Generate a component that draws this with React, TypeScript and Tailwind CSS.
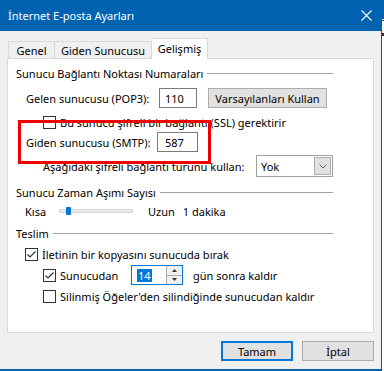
import React from "react";

const Check = ({ checked }: { checked?: boolean }) => (
	<div className="w-[13px] h-[13px] border border-[#333333] bg-white flex items-center justify-center shrink-0">
		{checked && (
			<svg width="11" height="11" viewBox="0 0 11 11">
				<path d="M1.5 5.5 L4 8 L9.5 2.5" fill="none" stroke="#333333" strokeWidth="1.2" />
			</svg>
		)}
	</div>
);

const GroupTitle = ({ text }: { text: string }) => (
	<div className="flex items-center h-[16px] w-[317px]">
		<span className="whitespace-nowrap">{text}</span>
		<div className="flex-1 h-px bg-[#a0a0a0] ml-[4px]" />
	</div>
);

const App = () => {
	return (
		<div className="relative w-[384px] h-[371px] flex bg-white text-[11px] text-black font-['Noto_Sans','DejaVu_Sans',sans-serif] leading-none overflow-hidden">
			<div className="w-[382px] h-full flex flex-col bg-[#f0f0f0] border-r border-b-2 border-[#0063b1]">
				{/* title bar */}
				<div className="h-[31px] bg-[#0063b1] flex items-center justify-between pl-[8px] pr-[9px] text-white">
					<span className="text-[11px]">İnternet E-posta Ayarları</span>
					<svg width="11" height="11" viewBox="0 0 11 11">
						<path d="M0.5 0.5 L10.5 10.5 M10.5 0.5 L0.5 10.5" stroke="#ffffff" strokeWidth="1.1" />
					</svg>
				</div>

				<div className="pl-[7px] pt-[7px]">
					{/* tabs */}
					<div className="flex items-end h-[20px] pl-[1px]">
						<div className="h-[17px] w-[47px] border border-b-0 border-[#d9d9d9] bg-[#f0f0f0] flex items-center justify-center pt-[1px]">
							Genel
						</div>
						<div className="h-[17px] w-[97px] border border-b-0 border-l-0 border-[#d9d9d9] bg-[#f0f0f0] flex items-center justify-center pt-[1px]">
							Giden Sunucusu
						</div>
						<div className="relative z-10 h-[21px] w-[56px] -mb-px border border-b-0 border-l-0 border-[#d9d9d9] bg-white flex items-center justify-center pb-[2px]">
							Gelişmiş
						</div>
					</div>

					{/* panel */}
					<div className="w-[367px] h-[275px] border border-[#d9d9d9] bg-white pl-[8px] pt-[6px] flex flex-col">
						<GroupTitle text="Sunucu Bağlantı Noktası Numaraları" />

						<div className="flex items-center h-[20px] mt-[7px] pl-[10px]">
							<span className="w-[133px] whitespace-nowrap">Gelen sunucusu (POP3):</span>
							<div className="w-[38px] h-[20px] border border-[#7a7a7a] flex items-center pl-[5px]">110</div>
							<div className="ml-[11px] w-[119px] h-[20px] border border-[#adadad] bg-[#e1e1e1] flex items-center justify-center">
								Varsayılanları Kullan
							</div>
						</div>

						<div className="flex items-center h-[14px] mt-[7px] pl-[27px] gap-[4px]">
							<Check />
							<span className="whitespace-nowrap">Bu sunucu şifreli bir bağlantı (SSL) gerektirir</span>
						</div>

						<div className="flex items-center h-[20px] mt-[3px] pl-[10px]">
							<span className="w-[131px] whitespace-nowrap">Giden sunucusu (SMTP):</span>
							<div className="w-[41px] h-[20px] border border-[#7a7a7a] flex items-center pl-[7px]">587</div>
						</div>

						<div className="flex items-center h-[22px] mt-[3px] pl-[27px]">
							<span className="w-[213px] whitespace-nowrap">Aşağıdaki şifreli bağlantı türünü kullan:</span>
							<div className="w-[77px] h-[22px] border border-[#a0a0a0] flex items-center justify-between pl-[4px] pr-px">
								<span>Yok</span>
								<div className="w-[17px] h-[18px] bg-[#e1e1e1] border border-[#adadad] flex items-center justify-center">
									<svg width="8" height="5" viewBox="0 0 8 5">
										<path d="M0.5 0.5 L4 4 L7.5 0.5" fill="none" stroke="#606060" strokeWidth="1" />
									</svg>
								</div>
							</div>
						</div>

						<div className="mt-[7px]">
							<GroupTitle text="Sunucu Zaman Aşımı Sayısı" />
						</div>

						<div className="flex items-center h-[16px] mt-[3px] pl-[9px]">
							<span className="w-[34px]">Kısa</span>
							<div className="relative w-[74px] h-[4px] bg-[#e7eaea] border border-[#d6d6d6]">
								<div className="absolute left-[6px] -top-[3px] w-[5px] h-[8px] bg-[#0078d7] rounded-[1px]" />
							</div>
							<span className="ml-[15px]">Uzun</span>
							<span className="ml-[8px]">1 dakika</span>
						</div>

						<div className="mt-[6px]">
							<GroupTitle text="Teslim" />
						</div>

						<div className="flex items-center h-[14px] mt-[6px] pl-[9px] gap-[4px]">
							<Check checked />
							<span className="whitespace-nowrap">İletinin bir kopyasını sunucuda bırak</span>
						</div>

						<div className="flex items-center h-[20px] mt-[4px] pl-[27px]">
							<Check checked />
							<span className="ml-[4px] w-[71px]">Sunucudan</span>
							<div className="w-[52px] h-[20px] border border-[#0078d7] flex">
								<div className="w-[34px] flex items-center pl-[5px]">
									<span className="bg-[#0078d7] text-white px-px h-[13px] flex items-center">14</span>
								</div>
								<div className="w-[16px] border-l border-[#adadad] flex flex-col">
									<div className="flex-1 bg-[#f0f0f0] border-b border-[#adadad] flex items-center justify-center">
										<svg width="5" height="3" viewBox="0 0 5 3">
											<path d="M0 3 L2.5 0 L5 3 Z" fill="#333333" />
										</svg>
									</div>
									<div className="flex-1 bg-[#f0f0f0] flex items-center justify-center">
										<svg width="5" height="3" viewBox="0 0 5 3">
											<path d="M0 0 L2.5 3 L5 0 Z" fill="#333333" />
										</svg>
									</div>
								</div>
							</div>
							<span className="ml-[10px] whitespace-nowrap">gün sonra kaldır</span>
						</div>

						<div className="flex items-center h-[14px] mt-[4px] pl-[27px] gap-[4px]">
							<Check />
							<span className="whitespace-nowrap">Silinmiş Öğeler'den silindiğinde sunucudan kaldır</span>
						</div>
					</div>

					{/* buttons */}
					<div className="flex justify-end gap-[9px] mt-[8px] w-[367px]">
						<div className="w-[72px] h-[20px] border-2 border-[#0078d7] bg-[#e1e1e1] flex items-center justify-center">
							Tamam
						</div>
						<div className="w-[72px] h-[20px] border border-[#adadad] bg-[#e1e1e1] flex items-center justify-center">
							İptal
						</div>
					</div>
				</div>
			</div>

			{/* window behind */}
			<div className="w-[2px] h-full bg-white flex flex-col">
				<div className="h-[19px] bg-[#0063b1]" />
				<div className="h-px bg-[#333333] mt-[1px]" />
				<div className="h-[3px] bg-[#5a1a3a] mt-[12px]" />
			</div>

			{/* red highlight */}
			<div className="absolute left-[18px] top-[120px] w-[193px] h-[44px] border-[3px] border-[#f00000]" />
		</div>
	);
};

export default App;
